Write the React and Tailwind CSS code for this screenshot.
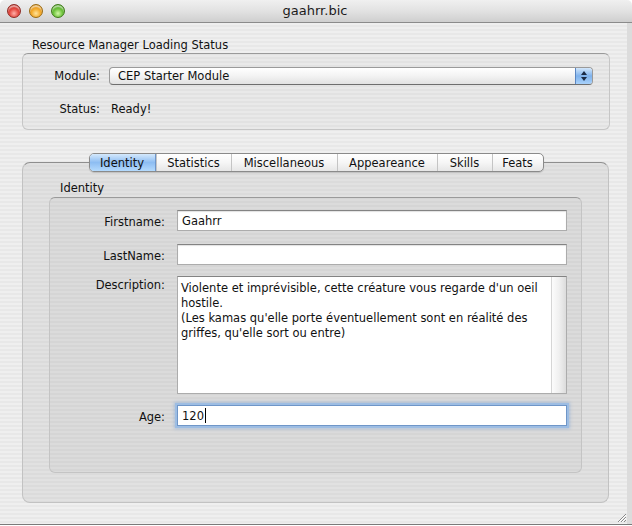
import React from "react";

function TextField({ children, focused }) {
  return (
    <div
      className={
        "h-[21px] bg-white flex items-center pl-[4px] border " +
        (focused
          ? "border-[#6f96c8] shadow-[0_0_0_2px_#9dbde3,0_0_3px_3px_rgba(120,160,215,0.45)]"
          : "border-[#acacac] border-t-[#838383] shadow-[inset_0_1px_1px_rgba(0,0,0,0.12)]")
      }
    >
      {children}
    </div>
  );
}

export default function App() {
  const tabs = [
    { label: "Identity", w: "w-[66px]", sel: true },
    { label: "Statistics", w: "w-[75px]" },
    { label: "Miscellaneous", w: "w-[106px]" },
    { label: "Appeareance", w: "w-[100px]" },
    { label: "Skills", w: "w-[55px]" },
    { label: "Feats", w: "w-[51px]" },
  ];
  return (
    <div className="w-[632px] h-[526px] bg-white font-['DejaVu_Sans',sans-serif] text-[11.5px] leading-[14px] text-[#111]">
      <div className="relative w-[632px] h-[525px] flex flex-col rounded-t-[5px] overflow-hidden border-b border-[#7a7a7a]">
        {/* Title bar */}
        <div className="h-[23px] shrink-0 grid grid-cols-[1fr_auto_1fr] items-center border-b border-[#8b8b8b] bg-gradient-to-b from-[#f0f0f0] via-[#e2e2e2] to-[#cfcfcf]">
          <div className="flex items-center gap-[8px] pl-[7px]">
            <div className="w-[14px] h-[14px] rounded-full border border-[#8e2b24] bg-[radial-gradient(circle_at_50%_70%,#ffb0a8_0%,#e4473e_45%,#b0231b_100%)] shadow-[inset_0_2px_1px_rgba(255,255,255,0.55)]" />
            <div className="w-[14px] h-[14px] rounded-full border border-[#9a6a12] bg-[radial-gradient(circle_at_50%_70%,#ffe49a_0%,#f3a92a_45%,#c27a0c_100%)] shadow-[inset_0_2px_1px_rgba(255,255,255,0.55)]" />
            <div className="w-[14px] h-[14px] rounded-full border border-[#3f7a1a] bg-[radial-gradient(circle_at_50%_70%,#d2f7a6_0%,#6cc23a_45%,#3f8f17_100%)] shadow-[inset_0_2px_1px_rgba(255,255,255,0.55)]" />
          </div>
          <div className="text-[13px] leading-[16px] text-[#1b1b1b] -ml-[2px]">gaahrr.bic</div>
          <div />
        </div>

        {/* Body */}
        <div className="flex-1 flex flex-col pl-[22px] pr-[17px] pt-[15px] bg-[repeating-linear-gradient(180deg,#efefef_0px,#efefef_2px,#e8e8e8_2px,#e8e8e8_4px)] border-r-[5px] border-r-[#dcdcdc]">
          <div className="pl-[10px] h-[14px]">Resource Manager Loading Status</div>
          <div className="mt-[1px] h-[77px] rounded-[6px] border border-[#c6c6c6] border-t-[#9a9a9a] bg-black/[0.025] pt-[13px] pr-[16px] grid grid-cols-[77px_1fr] gap-x-[9px] content-start">
            <div className="h-[18px] flex items-center justify-end">Module:</div>
            <div className="h-[18px] flex rounded-[4px] border border-[#9a9a9a] border-b-[#6e6e6e] overflow-hidden bg-gradient-to-b from-[#ffffff] via-[#f3f3f3] to-[#e2e2e2]">
              <div className="flex-1 pl-[8px] flex items-center">CEP Starter Module</div>
              <div className="w-[17px] border-l border-[#5a86c2] bg-gradient-to-b from-[#d3e7fb] via-[#7fb2ec] to-[#a9d2fb] flex flex-col items-center justify-center gap-[2px]">
                <svg width="6" height="4" viewBox="0 0 6 4"><path d="M0 4 L3 0 L6 4 Z" fill="#1b2b45" /></svg>
                <svg width="6" height="4" viewBox="0 0 6 4"><path d="M0 0 L3 4 L6 0 Z" fill="#1b2b45" /></svg>
              </div>
            </div>
            <div className="mt-[17px] h-[14px] text-right">Status:</div>
            <div className="mt-[17px] h-[14px] pl-[2px]">Ready!</div>
          </div>

          {/* Tab view */}
          <div className="mt-[23px] flex flex-col">
            <div className="relative z-10 flex justify-center">
              <div className="flex h-[19px] rounded-[5px] border border-[#8a8a8a] overflow-hidden bg-gradient-to-b from-[#ffffff] via-[#f6f6f6] to-[#e6e6e6] shadow-[0_1px_1px_rgba(0,0,0,0.15)]">
                {tabs.map((t, i) => (
                  <div
                    key={t.label}
                    className={
                      t.w +
                      " flex items-center justify-center " +
                      (i > 0 ? "border-l border-[#c4c4c4] " : "") +
                      (t.sel
                        ? "bg-gradient-to-b from-[#d5e9fc] via-[#8dbdf2] to-[#b4dafd] border-r border-[#6d95c9]"
                        : "")
                    }
                  >
                    {t.label}
                  </div>
                ))}
              </div>
            </div>
            <div className="-mt-[10px] h-[341px] mr-[1px] rounded-[8px] border border-[#c2c2c2] border-t-[#8e8e8e] bg-black/[0.055] pt-[18px] pl-[26px] pr-[26px] pb-[29px] flex flex-col">
              <div className="pl-[11px] h-[14px]">Identity</div>
              <div className="mt-[2px] flex-1 rounded-[6px] border border-[#c4c4c4] border-t-[#9a9a9a] bg-black/[0.025] pt-[12px] pr-[14px] grid grid-cols-[115px_1fr] gap-x-[12px] content-start">
                <div className="h-[21px] pt-[2px] flex items-center justify-end">Firstname:</div>
                <TextField>Gaahrr</TextField>

                <div className="mt-[13px] h-[21px] pt-[2px] flex items-center justify-end">LastName:</div>
                <div className="mt-[13px]"><TextField /></div>

                <div className="mt-[11px] pt-[2px] text-right">Description:</div>
                <div className="mt-[11px] h-[118px] flex bg-white border border-[#acacac] border-t-[#838383]">
                  <div className="flex-1 pl-[3px] pt-[4px] leading-[15px]">
                    <div>Violente et imprévisible, cette créature vous regarde d'un oeil</div>
                    <div>hostile.</div>
                    <div>(Les kamas qu'elle porte éventuellement sont en réalité des</div>
                    <div>griffes, qu'elle sort ou entre)</div>
                  </div>
                  <div className="w-[15px] border-l border-[#d6d6d6] bg-gradient-to-r from-[#fcfcfc] via-[#f0f0f0] to-[#dcdcdc]" />
                </div>

                <div className="mt-[11px] h-[22px] pt-[2px] flex items-center justify-end">Age:</div>
                <div className="mt-[11px]">
                  <TextField focused>
                    <span>120</span>
                    <span className="inline-block w-[1px] h-[15px] bg-black ml-[1px]" />
                  </TextField>
                </div>
              </div>
            </div>
          </div>
        </div>

        {/* resize grip */}
        <svg className="absolute right-[5px] bottom-[1px]" width="12" height="12" viewBox="0 0 12 12">
          <path d="M11 3 L3 11 M11 6 L6 11 M11 9 L9 11" stroke="#8a8a8a" strokeWidth="1" />
          <path d="M11 4 L4 11 M11 7 L7 11" stroke="#ffffff" strokeWidth="1" />
        </svg>
      </div>
    </div>
  );
}
